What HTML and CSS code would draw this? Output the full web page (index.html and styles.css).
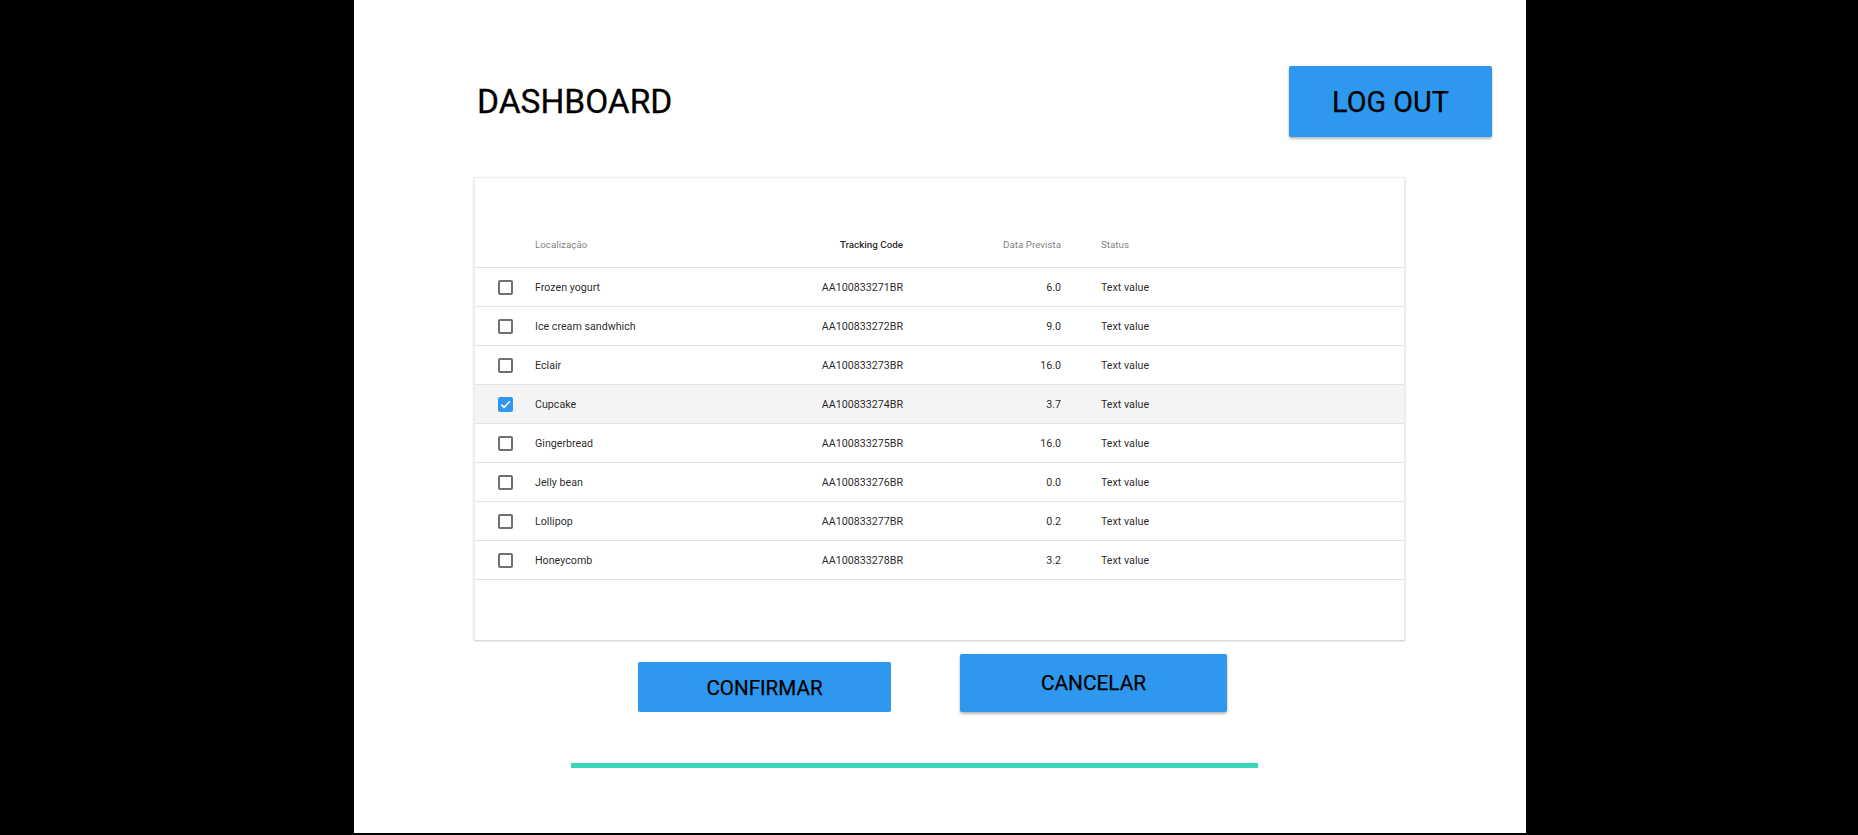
FILE: index.html
```html
<!DOCTYPE html>
<html lang="pt">
<head>
<meta charset="utf-8">
<title>Dashboard</title>
<link rel="stylesheet" href="styles.css">
</head>
<body>
<div class="panel">
  <header class="topbar">
    <h1 class="title">DASHBOARD</h1>
    <button class="btn btn-raised btn-logout">LOG OUT</button>
  </header>

  <section class="card">
    <div class="row head">
      <div class="cell"></div>
      <div class="cell">Localização</div>
      <div class="cell num sorted">Tracking Code</div>
      <div class="cell num">Data Prevista</div>
      <div class="cell status">Status</div>
    </div>

    <div class="row"><div class="cell"><span class="cb"></span></div><div class="cell">Frozen yogurt</div><div class="cell num">AA100833271BR</div><div class="cell num">6.0</div><div class="cell status">Text value</div></div>
    <div class="row"><div class="cell"><span class="cb"></span></div><div class="cell">Ice cream sandwhich</div><div class="cell num">AA100833272BR</div><div class="cell num">9.0</div><div class="cell status">Text value</div></div>
    <div class="row"><div class="cell"><span class="cb"></span></div><div class="cell">Eclair</div><div class="cell num">AA100833273BR</div><div class="cell num">16.0</div><div class="cell status">Text value</div></div>
    <div class="row selected"><div class="cell"><span class="cb checked"><svg viewBox="0 0 15 15" width="15" height="15"><path d="M3.3 7.6 L6.1 10.3 L11.8 4.4" fill="none" stroke="#fff" stroke-width="1.6"/></svg></span></div><div class="cell">Cupcake</div><div class="cell num">AA100833274BR</div><div class="cell num">3.7</div><div class="cell status">Text value</div></div>
    <div class="row"><div class="cell"><span class="cb"></span></div><div class="cell">Gingerbread</div><div class="cell num">AA100833275BR</div><div class="cell num">16.0</div><div class="cell status">Text value</div></div>
    <div class="row"><div class="cell"><span class="cb"></span></div><div class="cell">Jelly bean</div><div class="cell num">AA100833276BR</div><div class="cell num">0.0</div><div class="cell status">Text value</div></div>
    <div class="row"><div class="cell"><span class="cb"></span></div><div class="cell">Lollipop</div><div class="cell num">AA100833277BR</div><div class="cell num">0.2</div><div class="cell status">Text value</div></div>
    <div class="row"><div class="cell"><span class="cb"></span></div><div class="cell">Honeycomb</div><div class="cell num">AA100833278BR</div><div class="cell num">3.2</div><div class="cell status">Text value</div></div>
    <div class="card-foot"></div>
  </section>

  <div class="actions">
    <button class="btn btn-flat btn-confirm">CONFIRMAR</button>
    <button class="btn btn-raised btn-cancel">CANCELAR</button>
  </div>

  <div class="progress"></div>
</div>
</body>
</html>
```

FILE: styles.css
```css
html, body {
  margin: 0;
  padding: 0;
  background: #000;
}

body {
  font-family: Roboto, "Liberation Sans", sans-serif;
  color: #000;
}

.panel {
  width: 1172px;
  height: 833px;
  margin-left: 354px;
  background: #fff;
  display: flex;
  flex-direction: column;
}

.topbar {
  display: flex;
  justify-content: space-between;
  align-items: center;
  padding: 66px 34px 0 123px;
}

.title {
  margin: 0;
  font-size: 33.5px;
  font-weight: 400;
  line-height: 40px;
  letter-spacing: 0;
  -webkit-text-stroke: 0.3px #000;
}

.btn {
  font-family: Roboto, "Liberation Sans", sans-serif;
  border: none;
  border-radius: 2px;
  background: #2d98ee;
  color: #000;
  font-weight: 400;
  padding: 0;
  cursor: pointer;
  -webkit-text-stroke: 0.25px #000;
}

.btn-raised {
  box-shadow: 0 2px 3px rgba(0, 0, 0, 0.28), 0 0 1px rgba(0, 0, 0, 0.12);
}

.btn-flat {
  box-shadow: 0 0 1px rgba(0, 0, 0, 0.15);
}

.btn-logout {
  width: 203px;
  height: 71px;
  font-size: 28.8px;
}

.card {
  margin: 40px 0 0 120px;
  width: 931px;
  background: #fff;
  border: 1px solid #ededed;
  border-bottom: none;
  box-shadow: 0 1px 2px rgba(0, 0, 0, 0.22);
  box-sizing: border-box;
}

.row {
  display: grid;
  grid-template-columns: 60px 219px 149px 158px 1fr;
  height: 39px;
  padding-top: 1px;
  border-bottom: 1px solid #e3e3e3;
  box-sizing: border-box;
  align-items: center;
  font-size: 10.7px;
  color: rgba(0, 0, 0, 0.87);
}

.row.head {
  height: 90px;
  padding-top: 0;
  align-items: end;
  padding-bottom: 14px;
  font-size: 9.8px;
  color: rgba(0, 0, 0, 0.54);
}

.row.head .sorted {
  color: rgba(0, 0, 0, 0.87);
  font-weight: 500;
}

.row.selected {
  background: #f4f4f4;
}

.cell {
  line-height: 16px;
  white-space: nowrap;
}

.cell:first-child {
  padding-left: 23px;
  display: flex;
  align-items: center;
}

.num {
  text-align: right;
}

.status {
  padding-left: 40px;
}

.cb {
  display: block;
  width: 15px;
  height: 15px;
  box-sizing: border-box;
  border: 2px solid #707070;
  border-radius: 2px;
}

.cb.checked {
  border: none;
  background: #2d98ee;
}

.cb svg {
  display: block;
}

.card-foot {
  height: 60px;
}

.actions {
  display: flex;
  align-items: flex-end;
  gap: 69px;
  margin-top: 14px;
  padding-left: 284px;
}

.btn-confirm {
  width: 253px;
  height: 50px;
  font-size: 20.6px;
  padding-top: 2px;
}

.btn-cancel {
  width: 267px;
  height: 58px;
  font-size: 20.8px;
}

.progress {
  margin: 51px 0 0 217px;
  width: 687px;
  height: 5px;
  background: #3dd5b9;
}
```
